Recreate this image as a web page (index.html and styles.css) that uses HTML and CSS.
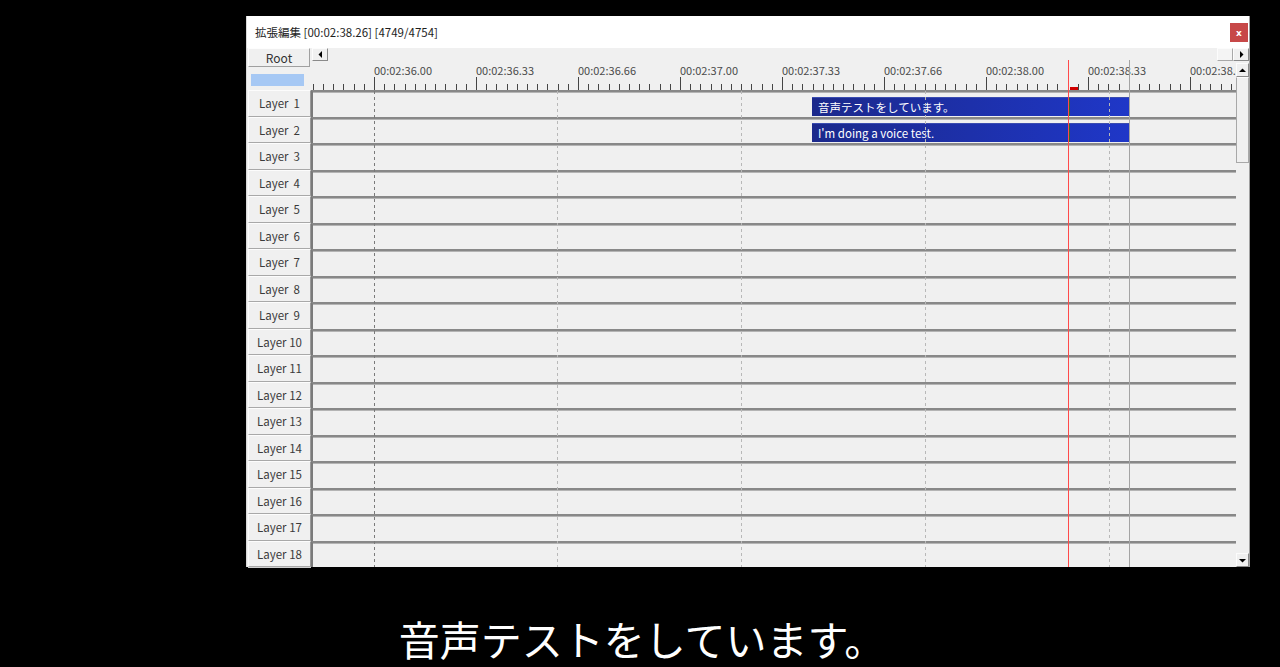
FILE: index.html
```html
<!DOCTYPE html>
<html lang="ja">
<head>
<meta charset="utf-8">
<title>拡張編集</title>
<link rel="stylesheet" href="styles.css">
</head>
<body>
<div class="screen">
  <div class="window">
    <div class="titlebar">
      <span class="title">拡張編集 [00:02:38.26] [4749/4754]</span>
      <span class="close">x</span>
    </div>
    <div class="editor">
      <div class="lefthead">
        <div class="root-btn">Root</div>
        <div class="scene-bar"></div>
      </div>
      <div class="hscroll">
        <div class="sbtn hbtn"><svg width="5" height="7" viewBox="0 0 5 7"><polygon points="4,0 4,7 0.5,3.5" fill="#000"/></svg></div>
        <div class="spacer"></div>
        <div class="hthumb"></div>
        <div class="sbtn hbtn"><svg width="5" height="7" viewBox="0 0 5 7"><polygon points="1,0 1,7 4.5,3.5" fill="#000"/></svg></div>
      </div>
      <div class="layers">
        <div class="layer">Layer&nbsp; 1</div>
        <div class="layer">Layer&nbsp; 2</div>
        <div class="layer">Layer&nbsp; 3</div>
        <div class="layer">Layer&nbsp; 4</div>
        <div class="layer">Layer&nbsp; 5</div>
        <div class="layer">Layer&nbsp; 6</div>
        <div class="layer">Layer&nbsp; 7</div>
        <div class="layer">Layer&nbsp; 8</div>
        <div class="layer">Layer&nbsp; 9</div>
        <div class="layer">Layer 10</div>
        <div class="layer">Layer 11</div>
        <div class="layer">Layer 12</div>
        <div class="layer">Layer 13</div>
        <div class="layer">Layer 14</div>
        <div class="layer">Layer 15</div>
        <div class="layer">Layer 16</div>
        <div class="layer">Layer 17</div>
        <div class="layer">Layer 18</div>
      </div>
      <div class="timeline">
        <div class="ruler">
          <div class="labels">
            <span>00:02:36.00</span><span>00:02:36.33</span><span>00:02:36.66</span><span>00:02:37.00</span><span>00:02:37.33</span><span>00:02:37.66</span><span>00:02:38.00</span><span>00:02:38.33</span><span>00:02:38.66</span>
          </div>
          <div class="ticks"></div>
        </div>
        <div class="tracks">
          <div class="track"><div class="clip">音声テストをしています。</div></div>
          <div class="track"><div class="clip">I'm doing a voice test.</div></div>
          <div class="track"></div>
          <div class="track"></div>
          <div class="track"></div>
          <div class="track"></div>
          <div class="track"></div>
          <div class="track"></div>
          <div class="track"></div>
          <div class="track"></div>
          <div class="track"></div>
          <div class="track"></div>
          <div class="track"></div>
          <div class="track"></div>
          <div class="track"></div>
          <div class="track"></div>
          <div class="track"></div>
          <div class="track"></div>
        </div>
        <div class="grid-line strong" style="--x:63px"></div>
        <div class="grid-line" style="--x:246px"></div>
        <div class="grid-line" style="--x:430px"></div>
        <div class="grid-line" style="--x:614px"></div>
        <div class="grid-line" style="--x:798px"></div>
        <div class="end-line"></div>
        <div class="cursor"></div>
        <div class="cursor-mark"></div>
      </div>
      <div class="vscroll">
        <div class="sbtn vbtn"><svg width="7" height="5" viewBox="0 0 7 5"><polygon points="0,4 7,4 3.5,0.5" fill="#000"/></svg></div>
        <div class="vthumb"></div>
        <div class="spacer"></div>
        <div class="sbtn vbtn"><svg width="7" height="5" viewBox="0 0 7 5"><polygon points="0,1 7,1 3.5,4.5" fill="#000"/></svg></div>
      </div>
    </div>
  </div>
  <div class="subtitle">音声テストをしています。</div>
</div>
</body>
</html>
```

FILE: styles.css
```css
html, body {
  margin: 0;
  padding: 0;
  background: #000;
}

body {
  font-family: "Noto Sans CJK JP", "Noto Sans", sans-serif;
}

.screen {
  width: 1280px;
  height: 667px;
  overflow: hidden;
  padding-top: 16px;
  box-sizing: border-box;
}

.window {
  margin-left: 246px;
  width: 1004px;
  background: #f0f0f0;
  border-left: 1px solid #d8d8d8;
  border-right: 1px solid #a0a0a0;
  box-sizing: border-box;
}

.titlebar {
  height: 32px;
  background: #fff;
  display: flex;
  align-items: center;
  justify-content: space-between;
  padding: 0 1px 0 8px;
}

.title {
  font-size: 11.5px;
  color: #1e1e1e;
}

.close {
  width: 18px;
  height: 19px;
  margin-top: 1px;
  background: #c74848;
  color: #fff;
  font-family: "DejaVu Sans", sans-serif;
  font-size: 9px;
  font-weight: bold;
  display: flex;
  align-items: center;
  justify-content: center;
}

.editor {
  display: grid;
  grid-template-columns: 64px 925px 13px;
  grid-template-rows: 12px 30px 477px;
}

.lefthead {
  grid-column: 1;
  grid-row: 1 / 3;
  padding-left: 1px;
}

.root-btn {
  width: 62px;
  height: 19px;
  box-sizing: border-box;
  border: 1px solid;
  border-color: #fdfdfd #a0a0a0 #a0a0a0 #fdfdfd;
  background: #f0f0f0;
  font-size: 12px;
  line-height: 17px;
  text-align: center;
  color: #333;
}

.scene-bar {
  width: 53px;
  height: 12px;
  margin: 7px 0 0 3px;
  background: #a6c8f4;
}

.hscroll {
  grid-column: 2 / 4;
  grid-row: 1;
  display: flex;
  align-items: stretch;
  height: 13px;
}

.spacer {
  flex: 1;
}

.sbtn {
  box-sizing: border-box;
  background: #f0f0f0;
  border: 1px solid;
  border-color: #fcfcfc #8a8a8a #8a8a8a #fcfcfc;
  display: flex;
  align-items: center;
  justify-content: center;
}

.hbtn {
  width: 16px;
}

.hscroll .hbtn:first-child {
  margin-left: 1px;
}

.hthumb {
  width: 16px;
  box-sizing: border-box;
  background: #f4f4f4;
  border: 1px solid;
  border-color: #fcfcfc #a8a8a8 #a8a8a8 #fcfcfc;
}

.layers {
  grid-column: 1;
  grid-row: 3;
  padding-left: 1px;
}

.layer {
  height: 26.5px;
  width: 63px;
  box-sizing: border-box;
  border: 1px solid;
  border-color: #fcfcfc #9a9a9a #a8a8a8 #fcfcfc;
  box-shadow: 0 1px 0 #d0d0d0;
  background: #f0f0f0;
  font-size: 11.5px;
  color: #3a3a3a;
  display: flex;
  align-items: center;
  justify-content: center;
  white-space: nowrap;
}

.timeline {
  grid-column: 2;
  grid-row: 2 / 4;
  position: relative;
  overflow: hidden;
}

.ruler {
  height: 30px;
  position: relative;
  overflow: hidden;
}

.labels {
  display: flex;
  padding-left: 63px;
  padding-top: 3px;
  white-space: nowrap;
}

.labels span {
  flex: 0 0 102px;
  font-size: 11px;
  line-height: 14px;
  color: #4a4a4a;
}

.ticks {
  position: absolute;
  left: -39px;
  right: 0;
  bottom: 0;
  height: 13px;
  background-image:
    repeating-linear-gradient(to right, #454545 0 1px, transparent 1px 102px),
    repeating-linear-gradient(to right, #454545 0 1px, transparent 1px 10.2px);
  background-size: 100% 13px, 100% 6px;
  background-repeat: no-repeat;
  background-position: 0 100%, 0 100%;
}

.tracks {
  height: 477px;
}

.track {
  height: 26.5px;
  box-sizing: border-box;
  border-top: 2px solid #888;
  border-left: 2px solid #7a7a7a;
  background: #f0f0f0;
  position: relative;
  box-shadow: inset 0 1px 0 #b4b4b4;
}

.clip {
  position: absolute;
  left: 499px;
  width: 317px;
  top: 4.5px;
  height: 19px;
  box-sizing: border-box;
  padding-left: 6px;
  background: linear-gradient(to right, #1b298c, #1f37c8);
  border-top: 1px solid #3a4cb0;
  color: #fff;
  font-size: 11.5px;
  line-height: 18px;
  white-space: nowrap;
  overflow: hidden;
}

.clip::after {
  content: "";
  position: absolute;
  left: 257px;
  top: 0;
  bottom: 0;
  width: 1px;
  background: #2b6a3a;
}

.grid-line {
  position: absolute;
  left: var(--x);
  top: 31px;
  bottom: 0;
  width: 1px;
  background: repeating-linear-gradient(to bottom, #b8b8b8 0 3px, transparent 3px 6px);
}

.grid-line.strong {
  background: repeating-linear-gradient(to bottom, #7a7a7a 0 3px, transparent 3px 6px);
}

.end-line {
  position: absolute;
  left: 818px;
  top: 0;
  bottom: 0;
  width: 1px;
  background: #a4a4a4;
}

.cursor {
  position: absolute;
  left: 757px;
  top: 0;
  bottom: 0;
  width: 1px;
  background: #ff4a4a;
}

.cursor-mark {
  position: absolute;
  left: 759px;
  top: 27px;
  width: 8px;
  height: 3px;
  background: #d00000;
}

.vscroll {
  grid-column: 3;
  grid-row: 2 / 4;
  display: flex;
  flex-direction: column;
  padding-top: 3px;
}

.vbtn {
  height: 14px;
}

.vthumb {
  height: 86px;
  box-sizing: border-box;
  background: #f0f0f0;
  border: 1px solid;
  border-color: #fcfcfc #a8a8a8 #a8a8a8 #a8a8a8;
}

.subtitle {
  margin-top: 46px;
  text-align: center;
  padding-left: 4px;
  color: #fff;
  font-family: "Noto Sans CJK JP", sans-serif;
  font-size: 41px;
  line-height: 50px;
  font-weight: 400;
}
```
